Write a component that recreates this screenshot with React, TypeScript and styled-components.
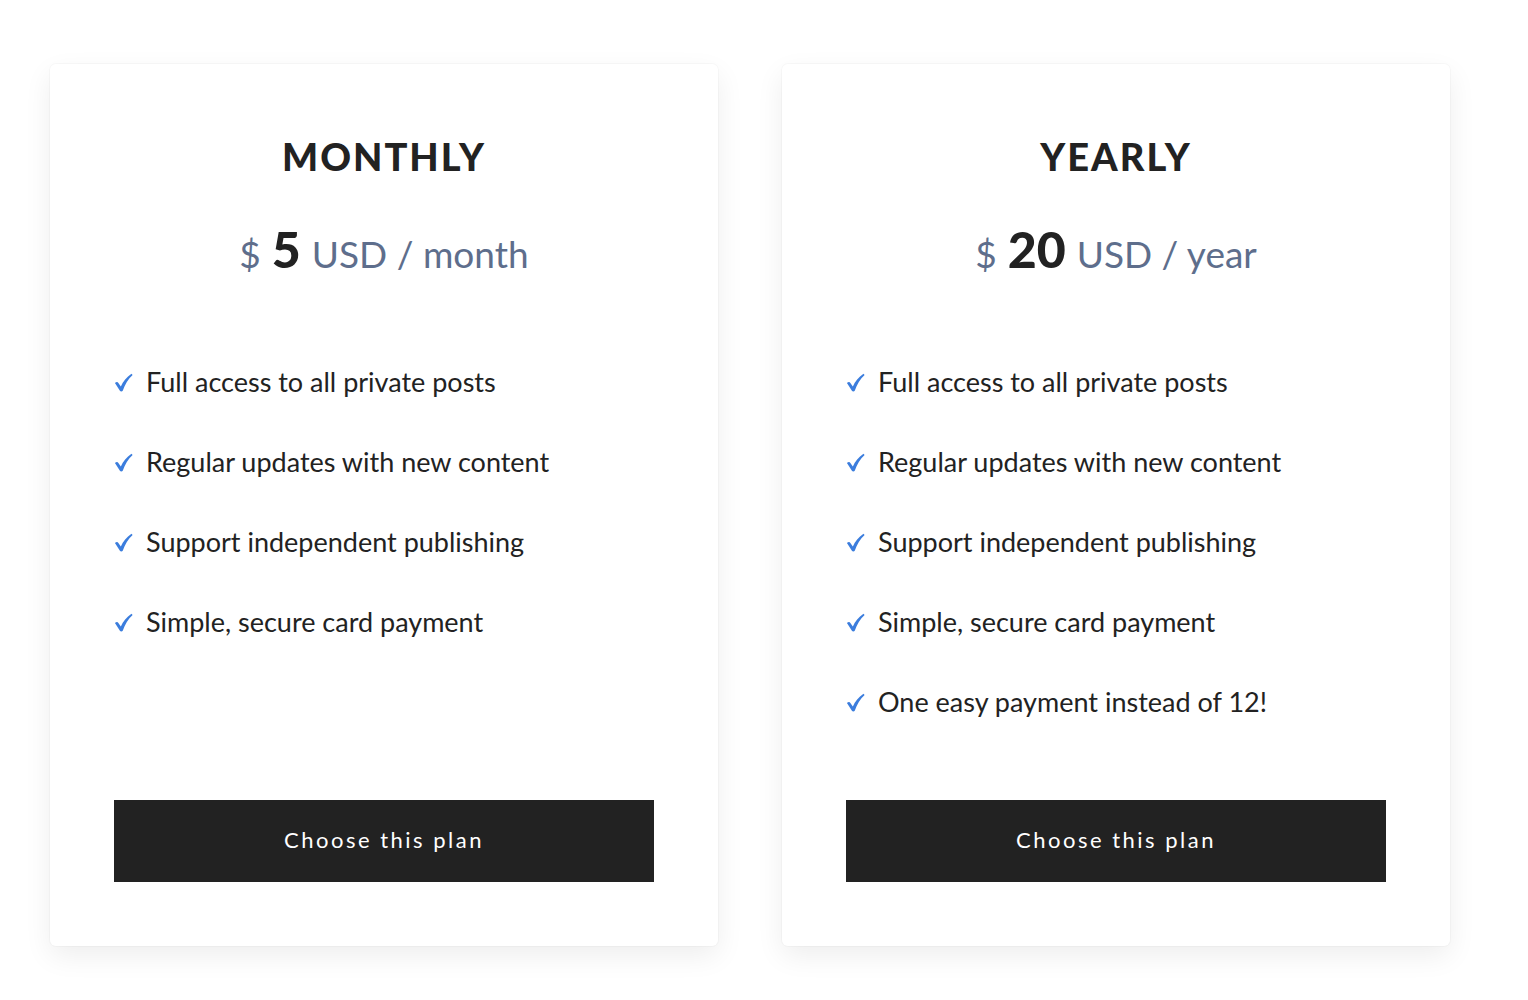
import React from 'react';
import styled, { createGlobalStyle } from 'styled-components';

const GlobalStyle = createGlobalStyle`
  * { box-sizing: border-box; }
  body {
    margin: 0;
    background: #ffffff;
    font-family: "Lato", "Liberation Sans", sans-serif;
    color: #222222;
  }
`;

const Page = styled.main`
  display: flex;
  gap: 64px;
  width: 1400px;
  margin: 64px 0 54px 50px;
  align-items: stretch;
`;

const Card = styled.section`
  flex: 1;
  display: flex;
  flex-direction: column;
  padding: 68px 64px 64px;
  background: #fff;
  border-radius: 6px;
  box-shadow: 0 0 0 1px rgba(0, 0, 0, 0.025), 0 10px 28px rgba(0, 0, 0, 0.07);
`;

const Title = styled.h2`
  margin: 0;
  font-size: 38px;
  line-height: 48px;
  font-weight: 900;
  letter-spacing: 2px;
  text-align: center;
  text-transform: uppercase;
  color: #222;
`;

const Price = styled.div`
  margin-top: 39px;
  height: 60px;
  display: flex;
  justify-content: center;
  align-items: baseline;
  gap: 11px;
  font-size: 37px;
  line-height: 60px;
  font-weight: 400;
  color: #5e6e8c;
`;

const Amount = styled.span`
  font-size: 50px;
  font-weight: 900;
  color: #222;
`;

const Features = styled.ul`
  flex: 1;
  list-style: none;
  margin: 83px 0 0;
  padding: 0;
  display: flex;
  flex-direction: column;
  gap: 40px;
`;

const Feature = styled.li`
  display: flex;
  align-items: center;
  gap: 13px;
  height: 40px;
  padding-bottom: 2px;
  font-size: 27px;
  color: #222;
`;

const Check = styled.svg`
  width: 19px;
  height: 19px;
  flex: none;
  margin-top: 3px;
  fill: #3b7ddd;
`;

const Button = styled.button`
  margin-top: 78px;
  height: 82px;
  width: 100%;
  padding: 0 0 4px;
  border: 0;
  border-radius: 0;
  background: #222222;
  color: #fff;
  font-family: "Lato", "Liberation Sans", sans-serif;
  font-size: 22px;
  letter-spacing: 2.5px;
  cursor: pointer;
`;

type Plan = {
  name: string;
  amount: string;
  period: string;
  features: string[];
};

const base = [
  'Full access to all private posts',
  'Regular updates with new content',
  'Support independent publishing',
  'Simple, secure card payment',
];

const plans: Plan[] = [
  { name: 'Monthly', amount: '5', period: 'month', features: base },
  { name: 'Yearly', amount: '20', period: 'year', features: [...base, 'One easy payment instead of 12!'] },
];

function Tick() {
  return (
    <Check viewBox="0 0 20 20" aria-hidden>
      <path d="M1 10.5 C2.4 9.4 3.8 9.2 4.6 10.4 L7.2 14.2 C9.6 8.8 13.2 4.4 18.4 0.8 L19.6 2 C14.8 6.4 11.6 11.8 9.2 18.6 C8.6 19.6 6.8 19.6 6.2 18.6 Z" />
    </Check>
  );
}

export default function App() {
  return (
    <>
      <GlobalStyle />
      <Page>
        {plans.map((plan) => (
          <Card key={plan.name}>
            <Title>{plan.name}</Title>
            <Price>
              <span>$</span>
              <Amount>{plan.amount}</Amount>
              <span>USD / {plan.period}</span>
            </Price>
            <Features>
              {plan.features.map((f) => (
                <Feature key={f}>
                  <Tick />
                  {f}
                </Feature>
              ))}
            </Features>
            <Button>Choose this plan</Button>
          </Card>
        ))}
      </Page>
    </>
  );
}
